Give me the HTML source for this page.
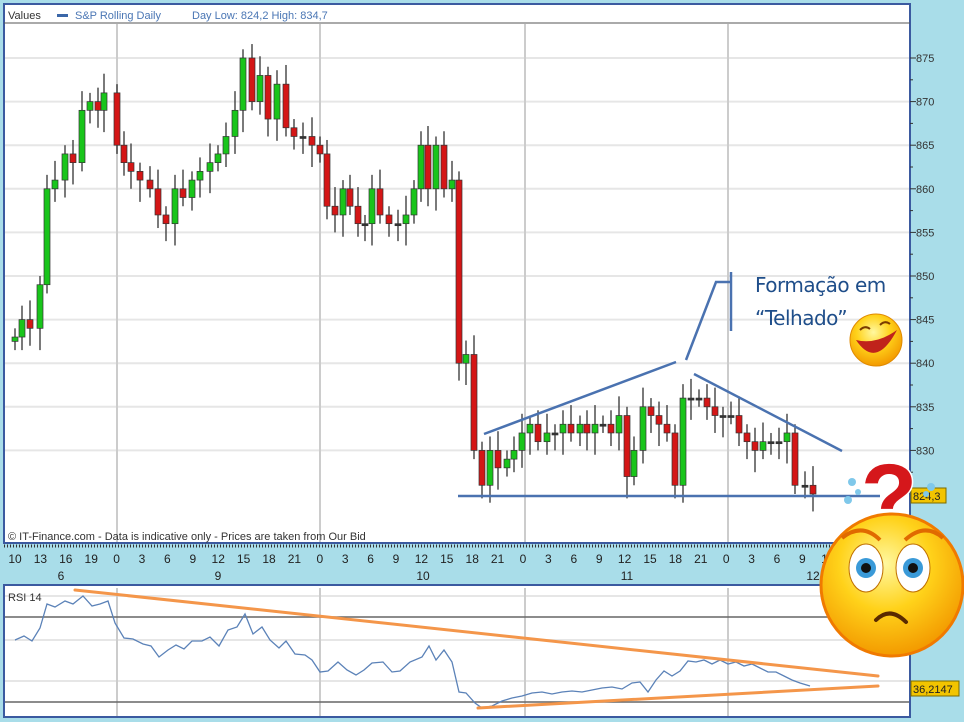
<!DOCTYPE html>
<html><head><meta charset="utf-8"><style>
body{margin:0;width:964px;height:722px;background:#a9dde9;overflow:hidden;font-family:"Liberation Sans",sans-serif}
svg{position:absolute;left:0;top:0}
</style></head><body>
<svg id="s" width="964" height="722" viewBox="0 0 964 722" xmlns="http://www.w3.org/2000/svg" font-family="Liberation Sans, sans-serif">
<rect x="0" y="0" width="964" height="722" fill="#a9dde9"/>
<rect x="4" y="4" width="906" height="539" fill="#fff" stroke="#3b5aa0" stroke-width="2"/>
<line x1="4" y1="23" x2="910" y2="23" stroke="#555" stroke-width="1"/>
<text x="8" y="19" font-size="11" fill="#333">Values</text>
<rect x="57" y="14" width="11" height="3" fill="#3b67a8"/>
<text x="75" y="19" font-size="11" fill="#4a76b4">S&amp;P Rolling Daily</text>
<text x="192" y="19" font-size="11" fill="#4a76b4">Day Low: 824,2 High: 834,7</text>
<g id="grid" stroke="#e6e6e6" stroke-width="2"></g>
<g stroke="#ccc" stroke-width="2">
<line x1="117" y1="24" x2="117" y2="542"/><line x1="320" y1="24" x2="320" y2="542"/><line x1="525" y1="24" x2="525" y2="542"/><line x1="728" y1="24" x2="728" y2="542"/>
</g>
<g id="axis" font-size="11" fill="#333"></g>
<g id="candles"></g>
<text x="8" y="540" font-size="11" fill="#333">© IT-Finance.com - Data is indicative only - Prices are taken from Our Bid</text>
<g id="xaxis" font-size="12" fill="#222"></g>
<rect x="4" y="585" width="906" height="132" fill="#fff" stroke="#3b5aa0" stroke-width="2"/>
<g stroke="#e6e6e6" stroke-width="2"><line x1="5" y1="596" x2="909" y2="596"/><line x1="5" y1="640" x2="909" y2="640"/><line x1="5" y1="681" x2="909" y2="681"/></g>
<g stroke="#ccc" stroke-width="2"><line x1="117" y1="588" x2="117" y2="716"/><line x1="320" y1="588" x2="320" y2="716"/><line x1="525" y1="588" x2="525" y2="716"/><line x1="728" y1="588" x2="728" y2="716"/></g>
<g stroke="#666" stroke-width="1.5"><line x1="5" y1="617" x2="909" y2="617"/><line x1="5" y1="702" x2="909" y2="702"/></g>
<text x="8" y="601" font-size="11" fill="#333">RSI 14</text>
<polyline fill="none" stroke="#5b82b8" stroke-width="1.3" points="15,640 24,636 32,641 40,628 47,604 55,607 65,601 73,604 83,596 92,606 100,604 108,601 115,623 124,638 133,639 143,644 151,646 159,657 168,650 176,645 184,649 192,641 202,641 210,637 219,646 228,630 237,627 245,614 253,634 262,627 270,640 279,648 286,641 295,654 305,655 312,660 320,672 328,671 338,662 347,670 356,675 364,670 372,663 383,662 392,672 400,671 410,662 422,657 429,646 436,660 444,650 452,662 459,692 466,693 475,703 482,708 492,706 502,701 512,698 522,696 532,693 542,692 552,694 562,692 572,691 582,692 592,690 602,688 612,687 622,689 632,683 640,682 648,692 656,680 664,671 672,676 680,671 688,661 696,662 704,660 712,664 720,660 728,664 736,662 744,666 752,664 760,668 768,672 776,672 784,676 792,680 800,683 810,686"/>
<rect x="911" y="681" width="48" height="15" fill="#f2c400" stroke="#7a6a00"/>
<text x="913" y="693" font-size="11" fill="#222">36,2147</text>
<g stroke="#f4964a" stroke-width="3" stroke-linecap="round"><line x1="75" y1="590" x2="878" y2="676"/><line x1="478" y1="708" x2="878" y2="686"/></g>
<g stroke="#4a72b0" stroke-width="2.5" fill="none">
<line x1="484" y1="434" x2="676" y2="362"/><line x1="694" y1="374" x2="842" y2="451"/><line x1="458" y1="496" x2="880" y2="496"/>
<polyline points="686,360 716,282 731,282"/><line x1="731" y1="272" x2="731" y2="331"/>
</g>
<text x="755" y="292" font-size="20" fill="#1f4e8a" font-family="DejaVu Sans, sans-serif" letter-spacing="-0.5">Formação em</text>
<text x="755" y="325" font-size="20" fill="#1f4e8a" font-family="DejaVu Sans, sans-serif" letter-spacing="-0.5">“Telhado”</text>
<rect x="911" y="488" width="35" height="15" fill="#f2c400" stroke="#7a6a00"/>
<text x="913" y="500" font-size="11" fill="#222">824,3</text>
<defs>
<radialGradient id="yg" cx="45%" cy="35%" r="65%"><stop offset="0" stop-color="#fff8a0"/><stop offset="0.5" stop-color="#ffd21a"/><stop offset="1" stop-color="#f39a00"/></radialGradient>
</defs>
<circle cx="876" cy="340" r="26" fill="url(#yg)" stroke="#e08a00"/>
<path d="M856,340 Q876,370 897,330 Q876,345 856,340Z" fill="#c0231b"/>
<path d="M860,330 q5,-5 10,-1 M880,325 q5,-5 10,-1" stroke="#7a3b00" stroke-width="2" fill="none"/>
<g fill="#7fc8ea"><circle cx="852" cy="482" r="4"/><circle cx="858" cy="492" r="3"/><circle cx="848" cy="500" r="4"/><circle cx="931" cy="487" r="4"/><circle cx="926" cy="494" r="3"/></g>
<text x="889" y="528" font-size="92" font-weight="bold" fill="#d5171b" stroke="#fff" stroke-width="3" text-anchor="middle" paint-order="stroke">?</text>
<circle cx="892" cy="585" r="71" fill="url(#yg)" stroke="#f07a00" stroke-width="3"/>
<path d="M842,538 q20,-16 38,2 M905,540 q20,-18 38,-2" stroke="#e06a00" stroke-width="4" fill="none"/>
<ellipse cx="866" cy="568" rx="17" ry="24" fill="#fff" stroke="#c07000"/>
<ellipse cx="913" cy="568" rx="17" ry="24" fill="#fff" stroke="#c07000"/>
<circle cx="866" cy="568" r="10" fill="#3a9ad8"/><circle cx="866" cy="568" r="5" fill="#111"/>
<circle cx="913" cy="568" r="10" fill="#3a9ad8"/><circle cx="913" cy="568" r="5" fill="#111"/>
<path d="M876,620 q14,-14 30,2" stroke="#5a2a00" stroke-width="4" fill="none" stroke-linecap="round"/>
</svg>
<script>
var s='http://www.w3.org/2000/svg';
function el(p,t,a,tx){var e=document.createElementNS(s,t);for(var k in a)e.setAttribute(k,a[k]);if(tx)e.textContent=tx;document.getElementById(p).appendChild(e);return e;}
function Y(p){return 58+(875-p)*8.72;}
var ticks=[875,870,865,860,855,850,845,840,835,830];
ticks.forEach(function(p){var y=Y(p);el('grid','line',{x1:5,y1:y,x2:909,y2:y});el('axis','text',{x:916,y:y+4},''+p);el('axis','line',{x1:910,y1:y,x2:916,y2:y,stroke:'#333'});el('axis','line',{x1:910,y1:y+21.8,x2:913,y2:y+21.8,stroke:'#333'});});
var d=[[15,843],[22,845],[30,844],[40,849],[47,860],[55,861],[65,864],[73,863],[82,869],[90,870],[98,869],[104,871],[117,865],[124,863],[131,862],[140,861],[150,860],[158,857],[166,856],[175,860],[183,859],[192,861],[200,862],[210,863],[218,864],[226,866],[235,869],[243,875],[252,870],[260,873],[268,868],[277,872],[286,867],[294,866],[303,866],[312,865],[320,864],[327,858],[335,857],[343,860],[350,858],[358,856],[365,856],[372,860],[380,857],[389,856],[398,856],[406,857],[414,860],[421,865],[428,860],[436,865],[444,860],[452,861],[459,840],[466,841],[474,830],[482,826],[490,830],[498,828],[507,829],[514,830],[522,832],[530,833],[538,831],[547,832],[555,832],[563,833],[571,832],[580,833],[587,832],[595,833],[603,833],[611,832],[619,834],[627,827],[634,830],[643,835],[651,834],[659,833],[667,832],[675,826],[683,836],[691,836],[699,836],[707,835],[715,834],[723,834],[731,834],[739,832],[747,831],[755,830],[763,831],[771,831],[779,831],[787,832],[795,826],[805,826],[813,825]];
var prev=842.5;
d.forEach(function(c,i){var o=prev,cl=c[1];var hi=Math.max(o,cl)+1+(i%3)*0.6,lo=Math.min(o,cl)-1-(i%4)*0.5;
el('candles','line',{x1:c[0],y1:Y(hi),x2:c[0],y2:Y(lo),stroke:'#333','stroke-width':1.3});
var t=Y(Math.max(o,cl)),b=Y(Math.min(o,cl));if(b-t<2){b=t+2;}
el('candles','rect',{x:c[0]-3,y:t,width:6,height:b-t,fill:cl>o?'#19c51b':(cl<o?'#d41616':'#333'),stroke:'#333','stroke-width':0.7});prev=cl;});
var xl=['10','13','16','19','0','3','6','9','12','15','18','21','0','3','6','9','12','15','18','21','0','3','6','9','12','15','18','21','0','3','6','9','12'];
xl.forEach(function(t,i){var x=15+i*25.4;el('xaxis','text',{x:x,y:563,'text-anchor':'middle'},t);});
el('xaxis','line',{x1:4,y1:546,x2:910,y2:546,stroke:'#333','stroke-dasharray':'1,2','stroke-width':3});
[[61,'6'],[218,'9'],[423,'10'],[627,'11'],[813,'12']].forEach(function(a){el('xaxis','text',{x:a[0],y:580,'text-anchor':'middle'},a[1]);});
</script>
</body></html>
